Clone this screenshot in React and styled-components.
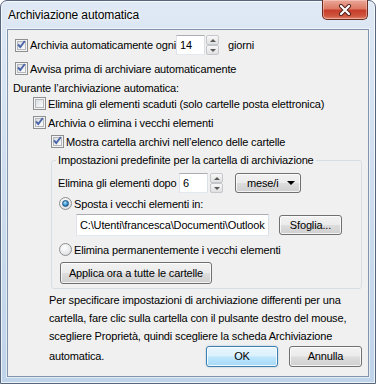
import React from 'react';
import styled, { createGlobalStyle, css } from 'styled-components';

const GlobalStyle = createGlobalStyle`
  html, body {
    margin: 0;
    padding: 0;
    background: #ffffff;
  }
  body {
    font-family: "Liberation Sans", Arial, sans-serif;
    font-size: 11px;
    letter-spacing: -0.15px;
    color: #000;
  }
  * {
    box-sizing: border-box;
  }
`;

const Window = styled.div`
  width: 376px;
  height: 384px;
  border: 1px solid #56677d;
  border-radius: 7px 7px 0 0;
  background: linear-gradient(to bottom, #dfe9f5 0%, #d2e0f0 35%, #bfd3e9 100%);
  box-shadow: inset 0 0 0 1px rgba(255, 255, 255, 0.7);
  display: flex;
  flex-direction: column;
  padding: 0 6px 6px;
`;

const TitleBar = styled.div`
  height: 28px;
  display: flex;
  align-items: center;
  padding-left: 1px;
`;

const Title = styled.span`
  font-size: 12px;
  letter-spacing: -0.1px;
  text-shadow: 0 0 6px #ffffff, 0 0 3px #ffffff;
`;

const CloseButton = styled.div`
  align-self: flex-start;
  margin: -1px 1px 0 auto;
  width: 46px;
  height: 20px;
  border: 1px solid #6b2b21;
  border-top: none;
  border-radius: 0 0 5px 5px;
  background: linear-gradient(to bottom, #eaa898 0%, #dd7a66 45%, #c73e2b 55%, #cf5741 85%, #e08a72 100%);
  box-shadow: inset 0 0 0 1px rgba(255, 220, 210, 0.45);
  display: flex;
  align-items: center;
  justify-content: center;
`;

const Client = styled.div`
  flex: 1;
  background: #f0f0f0;
  border: 1px solid #8294ab;
  box-shadow: 0 0 0 1px rgba(255, 255, 255, 0.55);
  display: flex;
  flex-direction: column;
  padding: 4px 6px 0 0;
`;

const Row = styled.div`
  display: flex;
  align-items: center;
  flex: none;
  height: ${p => p.$h || 19}px;
  margin-top: ${p => p.$top || 0}px;
  padding-left: ${p => p.$indent || 0}px;
  white-space: nowrap;
`;

const Label = styled.span`
  flex: none;
  width: ${p => (p.$w ? `${p.$w}px` : 'auto')};
  margin-left: ${p => p.$ml || 0}px;
`;

const Box = styled.span`
  flex: none;
  width: 13px;
  height: 13px;
  margin-right: 2px;
  border: 1px solid #8e8f8f;
  background: #f4f4f4;
  padding: 1px;
  display: flex;
`;

const BoxInner = styled.span`
  flex: 1;
  border: 1px solid #b3b8bd;
  background: linear-gradient(135deg, #dadee3 0%, #f2f3f4 70%, #fbfbfb 100%);
  position: relative;
`;

const CheckMark = styled.svg`
  position: absolute;
  left: -2px;
  top: -3px;
`;

const Checkbox = ({ checked, children }) => (
  <>
    <Box>
      <BoxInner>
        {checked && (
          <CheckMark width="11" height="11" viewBox="0 0 11 11">
            <path d="M2 5.5 L4.3 8 L8.8 2" fill="none" stroke="#4a66a8" strokeWidth="1.9" />
          </CheckMark>
        )}
      </BoxInner>
    </Box>
    <Label>{children}</Label>
  </>
);

const RadioCircle = styled.span`
  flex: none;
  width: 13px;
  height: 13px;
  margin-right: 2px;
  border-radius: 50%;
  border: 1px solid #8e8f8f;
  background: radial-gradient(circle at 40% 35%, #ffffff 0%, #e6e8ea 60%, #cfd3d7 100%);
  display: flex;
  align-items: center;
  justify-content: center;
`;

const RadioDot = styled.span`
  width: 7px;
  height: 7px;
  border-radius: 50%;
  border: 1px solid #1d4f80;
  background: radial-gradient(circle at 40% 35%, #b6e6fb 0%, #3d98cf 50%, #11518f 100%);
`;

const Radio = ({ checked, children }) => (
  <>
    <RadioCircle>{checked && <RadioDot />}</RadioCircle>
    <Label>{children}</Label>
  </>
);

const textBox = css`
  flex: none;
  border: 1px solid #abadb3;
  border-left-color: #e2e3ea;
  border-right-color: #dbdfe6;
  border-bottom-color: #e3e9ef;
  background: #ffffff;
  font-family: "Liberation Sans", Arial, sans-serif;
  font-size: 11px;
  letter-spacing: -0.15px;
  color: #000;
  outline: none;
  margin: 0;
`;

const NumberBox = styled.input`
  ${textBox};
  width: 29px;
  height: 20px;
  padding: 0 0 0 3px;
`;

const PathBox = styled.input`
  ${textBox};
  width: 193px;
  height: 22px;
  padding: 0 0 0 3px;
`;

const Spin = styled.div`
  flex: none;
  width: 13px;
  height: 20px;
  margin-left: ${p => p.$ml || 1}px;
  display: flex;
  flex-direction: column;
`;

const SpinButton = styled.div`
  flex: 1;
  border: 1px solid #c4c7cc;
  border-radius: 2px;
  background: linear-gradient(to bottom, #f8f8f8 0%, #ececec 50%, #e0e0e0 100%);
  display: flex;
  align-items: center;
  justify-content: center;
`;

const Arrow = styled.span`
  width: 0;
  height: 0;
  border-left: 3px solid transparent;
  border-right: 3px solid transparent;
  ${p => (p.$down ? 'border-top: 3px solid #5a5a5a;' : 'border-bottom: 3px solid #5a5a5a;')}
`;

const Spinner = ({ ml }) => (
  <Spin $ml={ml}>
    <SpinButton><Arrow /></SpinButton>
    <SpinButton><Arrow $down /></SpinButton>
  </Spin>
);

const buttonFace = css`
  border: 1px solid #707070;
  border-radius: 3px;
  background: linear-gradient(to bottom, #f2f2f2 0%, #ebebeb 49%, #dddddd 51%, #cfcfcf 100%);
  box-shadow: inset 0 0 0 1px rgba(255, 255, 255, 0.75);
`;

const Button = styled.div`
  ${buttonFace};
  flex: none;
  width: ${p => p.$w}px;
  height: ${p => p.$h || 21}px;
  margin-left: ${p => p.$ml || 0}px;
  display: flex;
  align-items: center;
  justify-content: center;
  ${p =>
    p.$default &&
    css`
      border-color: #3c7fb1;
      background: linear-gradient(to bottom, #eaf6fd 0%, #d9f0fc 49%, #bee6fd 51%, #a7d9f5 100%);
      box-shadow: inset 0 0 0 1px rgba(255, 255, 255, 0.8), 0 0 2px rgba(60, 127, 177, 0.4);
    `}
`;

const Select = styled.div`
  ${buttonFace};
  flex: none;
  width: 66px;
  height: 20px;
  margin-left: 12px;
  display: flex;
  align-items: center;
  padding: 0 5px 0 11px;
`;

const SelectArrow = styled.span`
  margin-left: auto;
  width: 0;
  height: 0;
  border-left: 4px solid transparent;
  border-right: 4px solid transparent;
  border-top: 4px solid #000;
`;

const Group = styled.fieldset`
  flex: none;
  margin: 1px 0 0 43px;
  padding: 0 6px 4px;
  min-width: 0;
  border: 1px solid #d5dfe5;
  border-radius: 3px;
`;

const Legend = styled.legend`
  padding: 0 2px;
  margin-left: -2px;
  line-height: 16px;
  font-size: 11px;
`;

const Note = styled.div`
  flex: none;
  margin: 2px 0 0 41px;
  line-height: 18px;
`;

const Footer = styled.div`
  flex: none;
  height: 22px;
  display: flex;
  align-items: center;
  padding-left: 41px;
`;

const Actions = styled.div`
  margin-left: auto;
  display: flex;
  gap: 11px;
`;

export default function App() {
  return (
    <>
      <GlobalStyle />
      <Window>
        <TitleBar>
          <Title>Archiviazione automatica</Title>
          <CloseButton>
            <svg width="14" height="12" viewBox="0 0 14 12">
              <path d="M3 2 L11 10 M11 2 L3 10" stroke="#4a1f18" strokeWidth="4" strokeLinecap="round" />
              <path d="M3 2 L11 10 M11 2 L3 10" stroke="#ffffff" strokeWidth="2.2" strokeLinecap="round" />
            </svg>
          </CloseButton>
        </TitleBar>
        <Client>
          <Row $h={22} $indent={7}>
            <Checkbox checked>
              <Label $w={158}>Archivia automaticamente ogni</Label>
            </Checkbox>
            <NumberBox readOnly defaultValue="14" />
            <Spinner ml={1} />
            <Label $ml={9}>giorni</Label>
          </Row>
          <Row $top={3} $indent={7}>
            <Checkbox checked>Avvisa prima di archiviare automaticamente</Checkbox>
          </Row>
          <Row $indent={5}>Durante l’archiviazione automatica:</Row>
          <Row $top={-3} $indent={25}>
            <Checkbox>Elimina gli elementi scaduti (solo cartelle posta elettronica)</Checkbox>
          </Row>
          <Row $indent={25}>
            <Checkbox checked>Archivia o elimina i vecchi elementi</Checkbox>
          </Row>
          <Row $indent={43}>
            <Checkbox checked>Mostra cartella archivi nell’elenco delle cartelle</Checkbox>
          </Row>
          <Group>
            <Legend>Impostazioni predefinite per la cartella di archiviazione</Legend>
            <Row $h={20} $top={5}>
              <Label $w={121}>Elimina gli elementi dopo</Label>
              <NumberBox readOnly defaultValue="6" />
              <Spinner ml={2} />
              <Select>
                mese/i
                <SelectArrow />
              </Select>
            </Row>
            <Row $top={1} $indent={1}>
              <Radio checked>Sposta i vecchi elementi in:</Radio>
            </Row>
            <Row $h={22} $top={1} $indent={18}>
              <PathBox readOnly defaultValue={'C:\\Utenti\\francesca\\Documenti\\Outlook'} />
              <Button $w={63} $h={20} $ml={10}>Sfoglia...</Button>
            </Row>
            <Row $top={4} $indent={1}>
              <Radio>Elimina permanentemente i vecchi elementi</Radio>
            </Row>
            <Row $h={22} $top={3} $indent={2}>
              <Button $w={152} $h={22}>Applica ora a tutte le cartelle</Button>
            </Row>
          </Group>
          <Note>
            Per specificare impostazioni di archiviazione differenti per una
            <br />
            cartella, fare clic sulla cartella con il pulsante destro del mouse,
            <br />
            scegliere Proprietà, quindi scegliere la scheda Archiviazione
          </Note>
          <Footer>
            automatica.
            <Actions>
              <Button $w={72} $default>OK</Button>
              <Button $w={73}>Annulla</Button>
            </Actions>
          </Footer>
        </Client>
      </Window>
    </>
  );
}
